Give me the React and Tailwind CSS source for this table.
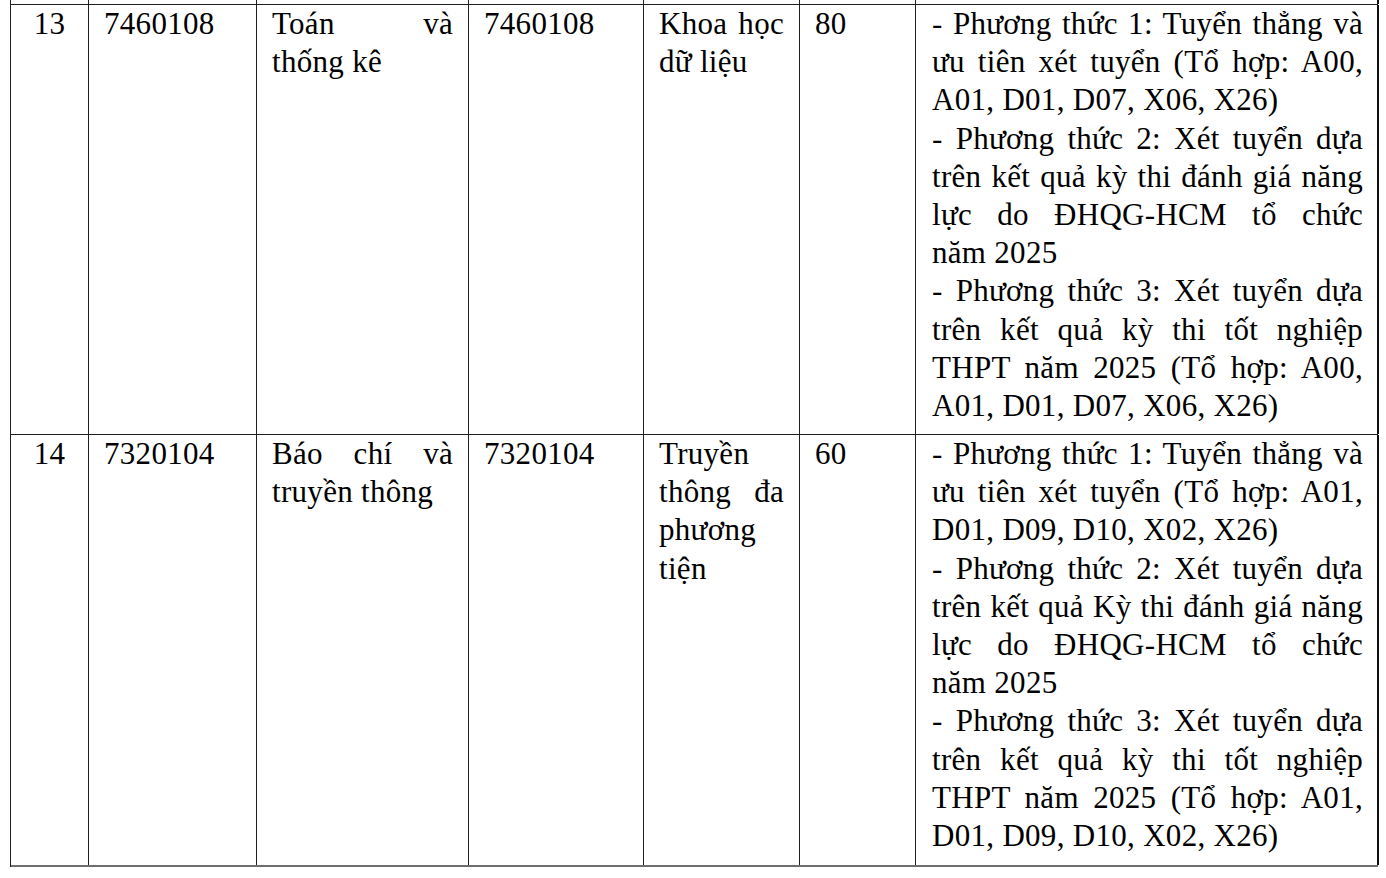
const rows = [
  {
    stt: '13',
    code: '7460108',
    name: [
      ['Toán và', true],
      ['thống kê', false],
    ],
    code2: '7460108',
    name2: [
      ['Khoa học', true],
      ['dữ liệu', false],
    ],
    quota: '80',
    methods: [
      ['- Phương thức 1: Tuyển thẳng và', true],
      ['ưu tiên xét tuyển (Tổ hợp: A00,', true],
      ['A01, D01, D07, X06, X26)', false],
      ['- Phương thức 2: Xét tuyển dựa', true],
      ['trên kết quả kỳ thi đánh giá năng', true],
      ['lực do ĐHQG-HCM tổ chức', true],
      ['năm 2025', false],
      ['- Phương thức 3: Xét tuyển dựa', true],
      ['trên kết quả kỳ thi tốt nghiệp', true],
      ['THPT năm 2025 (Tổ hợp: A00,', true],
      ['A01, D01, D07, X06, X26)', false],
    ],
    height: 'h-[430px]',
  },
  {
    stt: '14',
    code: '7320104',
    name: [
      ['Báo chí và', true],
      ['truyền thông', false],
    ],
    code2: '7320104',
    name2: [
      ['Truyền', false],
      ['thông đa', true],
      ['phương', false],
      ['tiện', false],
    ],
    quota: '60',
    methods: [
      ['- Phương thức 1: Tuyển thẳng và', true],
      ['ưu tiên xét tuyển (Tổ hợp: A01,', true],
      ['D01, D09, D10, X02, X26)', false],
      ['- Phương thức 2: Xét tuyển dựa', true],
      ['trên kết quả Kỳ thi đánh giá năng', true],
      ['lực do ĐHQG-HCM tổ chức', true],
      ['năm 2025', false],
      ['- Phương thức 3: Xét tuyển dựa', true],
      ['trên kết quả kỳ thi tốt nghiệp', true],
      ['THPT năm 2025 (Tổ hợp: A01,', true],
      ['D01, D09, D10, X02, X26)', false],
    ],
    height: 'h-[432px]',
  },
];

function Lines({ lines }) {
  return lines.map(([text, justify], i) => (
    <div
      key={i}
      className={justify ? 'text-justify [text-align-last:justify]' : 'text-left'}
    >
      {text}
    </div>
  ));
}

// khung cột dùng chung cho mọi hàng
function Row({ row, className }) {
  return (
    <div className={`flex ${className}`}>
      <div className="w-[78px] shrink-0 border-r border-[#1f1f1f] text-center">{row?.stt}</div>
      <div className="w-[168px] shrink-0 border-r border-[#1f1f1f] px-[15px]">{row?.code}</div>
      <div className="w-[212px] shrink-0 border-r border-[#1f1f1f] px-[15px]">
        {row && <Lines lines={row.name} />}
      </div>
      <div className="w-[175px] shrink-0 border-r border-[#1f1f1f] px-[15px]">{row?.code2}</div>
      <div className="w-[156px] shrink-0 border-r border-[#1f1f1f] px-[15px]">
        {row && <Lines lines={row.name2} />}
      </div>
      <div className="w-[116px] shrink-0 border-r border-[#1f1f1f] px-[15px]">{row?.quota}</div>
      <div className="w-[463px] shrink-0 border-r-2 border-[#111] pl-[16px] pr-[14px]">
        {row && <Lines lines={row.methods} />}
      </div>
    </div>
  );
}

export default function App() {
  return (
    <div className="w-[1386px] h-[878px] overflow-hidden bg-white text-black font-['Liberation_Serif','Times_New_Roman',serif] text-[31px] leading-[38.2px] tracking-[0.3px]">
      <div className="ml-[10px] w-[1368px] border-l border-[#1f1f1f]">
        <Row className="h-[5px] border-b border-[#1f1f1f]" />
        <Row row={rows[0]} className={`${rows[0].height} border-b border-[#1f1f1f]`} />
        <Row row={rows[1]} className={`${rows[1].height} border-b-2 border-[#6e6e6e]`} />
      </div>
    </div>
  );
}
